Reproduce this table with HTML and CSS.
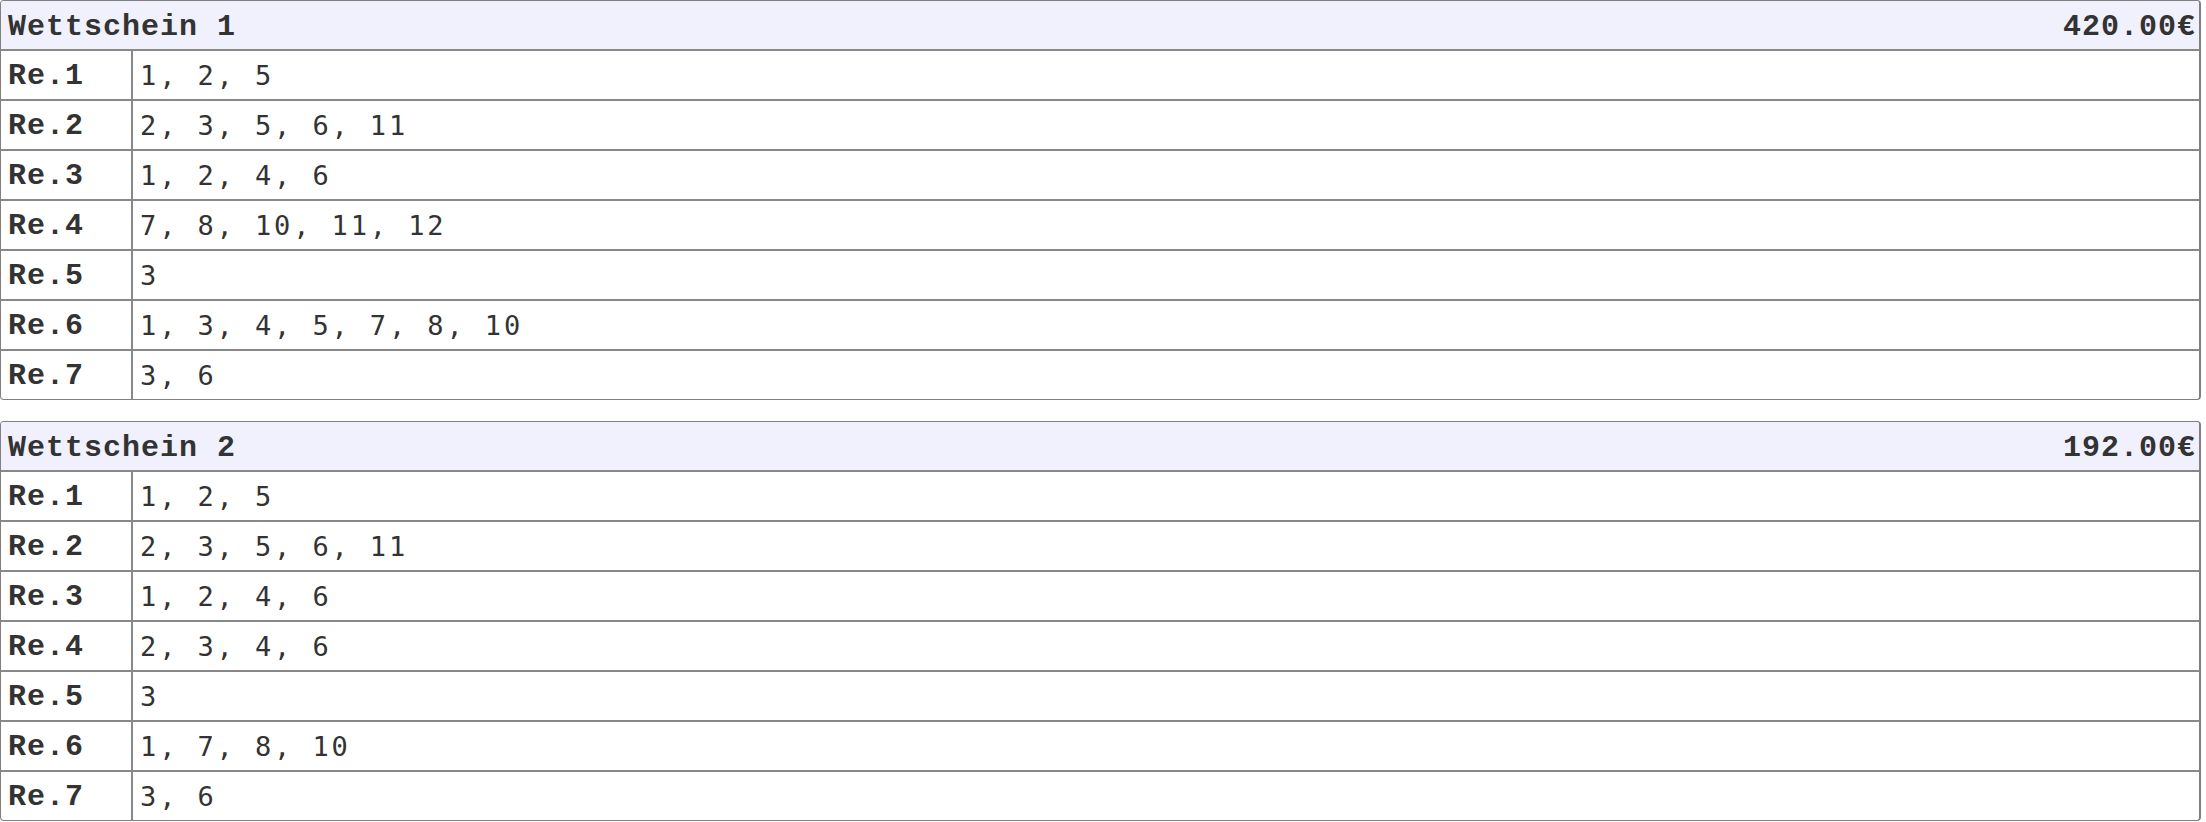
FILE: index.html
```html
<!DOCTYPE html>
<html lang="de">
<head>
<meta charset="utf-8">
<title>Wettscheine</title>
<link rel="stylesheet" href="styles.css">
</head>
<body>
<div class="list">
  <section class="ticket">
    <div class="head"><span class="title">Wettschein 1</span><span class="amount">420.00€</span></div>
    <div class="row"><div class="label">Re.1</div><div class="value">1, 2, 5</div></div>
    <div class="row"><div class="label">Re.2</div><div class="value">2, 3, 5, 6, 11</div></div>
    <div class="row"><div class="label">Re.3</div><div class="value">1, 2, 4, 6</div></div>
    <div class="row"><div class="label">Re.4</div><div class="value">7, 8, 10, 11, 12</div></div>
    <div class="row"><div class="label">Re.5</div><div class="value">3</div></div>
    <div class="row"><div class="label">Re.6</div><div class="value">1, 3, 4, 5, 7, 8, 10</div></div>
    <div class="row"><div class="label">Re.7</div><div class="value">3, 6</div></div>
  </section>
  <section class="ticket">
    <div class="head"><span class="title">Wettschein 2</span><span class="amount">192.00€</span></div>
    <div class="row"><div class="label">Re.1</div><div class="value">1, 2, 5</div></div>
    <div class="row"><div class="label">Re.2</div><div class="value">2, 3, 5, 6, 11</div></div>
    <div class="row"><div class="label">Re.3</div><div class="value">1, 2, 4, 6</div></div>
    <div class="row"><div class="label">Re.4</div><div class="value">2, 3, 4, 6</div></div>
    <div class="row"><div class="label">Re.5</div><div class="value">3</div></div>
    <div class="row"><div class="label">Re.6</div><div class="value">1, 7, 8, 10</div></div>
    <div class="row"><div class="label">Re.7</div><div class="value">3, 6</div></div>
  </section>
</div>
</body>
</html>
```
FILE: styles.css
```css
html, body {
  margin: 0;
  padding: 0;
  background: #ffffff;
}
.list {
  display: flex;
  flex-direction: column;
  gap: 21px;
  width: 2201px;
}
.ticket {
  border: 1px solid #808080;
  border-right-width: 2px;
  border-radius: 4px;
  overflow: hidden;
  color: #333333;
}
.head {
  display: flex;
  justify-content: space-between;
  align-items: center;
  height: 48px;
  padding: 3px 3px 0 7px;
  box-sizing: border-box;
  background: #f1f1fe;
  font-family: "Liberation Mono", "Courier New", monospace;
  font-weight: bold;
  font-size: 30px;
  letter-spacing: 1px;
}
.row {
  display: grid;
  grid-template-columns: 132px 1fr;
  border-top: 2px solid #888888;
  height: 50px;
  box-sizing: border-box;
}
.label {
  display: flex;
  align-items: center;
  padding: 2px 0 0 7px;
  border-right: 2px solid #888888;
  font-family: "Liberation Mono", "Courier New", monospace;
  font-weight: bold;
  font-size: 30px;
  letter-spacing: 1px;
}
.value {
  display: flex;
  align-items: center;
  padding-left: 7px;
  font-family: "DejaVu Sans Mono", monospace;
  font-size: 27px;
  letter-spacing: 2.9px;
}
```
